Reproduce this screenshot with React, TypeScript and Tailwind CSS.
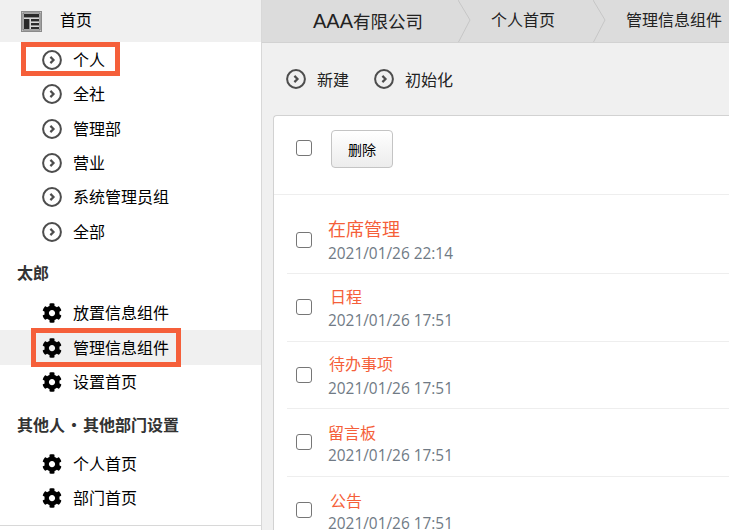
import { FaCog } from "react-icons/fa";

const font = "font-['Noto_Sans_CJK_SC','Liberation_Sans',sans-serif]";

const CircleArrow = () => (
  <svg width="20" height="20" viewBox="0 0 20 20" className="shrink-0">
    <circle cx="10" cy="10" r="8.9" fill="none" stroke="#4d4d4d" strokeWidth="2" />
    <path d="M8.4 6.9 L11.5 10 L8.4 13.1" fill="none" stroke="#4d4d4d" strokeWidth="2.2" />
  </svg>
);

const HomeIcon = () => (
  <svg width="21" height="21" viewBox="0 0 21 21" className="shrink-0">
    <rect x="0.5" y="0.5" width="20" height="20" fill="#cfcfcf" stroke="#8a8a8a" />
    <rect x="2" y="2" width="17" height="17" fill="#d8d8d8" stroke="#333" strokeWidth="0.6" />
    <rect x="3" y="3" width="15" height="3.4" fill="#2a2a2a" />
    <rect x="3" y="8" width="5.4" height="10" fill="#2a2a2a" />
    <rect x="10" y="8" width="8" height="2.4" fill="#2a2a2a" />
    <rect x="10" y="12" width="8" height="2.4" fill="#2a2a2a" />
    <rect x="10" y="16" width="8" height="2" fill="#2a2a2a" />
  </svg>
);

const NavItem = ({ label, gear, active }: { label: string; gear?: boolean; active?: boolean }) => (
  <div className={`flex h-[34.4px] items-center pl-[42px] text-[16px] text-black ${active ? "bg-[#f0f0f0]" : ""}`}>
    {gear ? <FaCog size={20} className="shrink-0 text-black" /> : <CircleArrow />}
    <span className="ml-[11px] pb-[2px]">{label}</span>
  </div>
);

const Chevron = () => (
  <svg width="14" height="44" viewBox="0 0 14 44" className="absolute right-[-13px] top-0 z-10">
    <path d="M0 0 L12 20 L0 43" fill="none" stroke="#c6c6c6" strokeWidth="1" />
  </svg>
);

const rows = [
  { title: "在席管理", date: "2021/01/26 22:14", size: "text-[18px]", pl: "pl-0", h: "h-[79px]", pt: "pt-[12px]", titleMt: "mt-[1px]", dateMt: "mt-[3px]" },
  { title: "日程", date: "2021/01/26 17:51", size: "text-[16px]", pl: "pl-[2px]", h: "h-[67.5px]", pt: "pt-0", titleMt: "mt-[2px]", dateMt: "mt-[2px]" },
  { title: "待办事项", date: "2021/01/26 17:51", size: "text-[16px]", pl: "pl-[1px]", h: "h-[67.5px]", pt: "pt-0", titleMt: "mt-[1px]", dateMt: "mt-[3px]" },
  { title: "留言板", date: "2021/01/26 17:51", size: "text-[16px]", pl: "pl-0", h: "h-[67.5px]", pt: "pt-0", titleMt: "mt-[3px]", dateMt: "mt-[1px]" },
  { title: "公告", date: "2021/01/26 17:51", size: "text-[16px]", pl: "pl-[2px]", h: "h-[67.5px]", pt: "pt-0", titleMt: "mt-[3px]", dateMt: "mt-[1px]" },
];

const Checkbox = () => <div className="h-[16px] w-[16px] shrink-0 rounded-[3px] border border-[#767676] bg-white" />;

export default function App() {
  return (
    <div className={`relative flex h-[530px] w-[729px] overflow-hidden bg-white ${font}`}>
      <aside className="relative h-full w-[262px] shrink-0 border-r border-[#d8d8d8] bg-white">
        <div className="flex h-[42px] items-center bg-[#f0f0f0] pl-[21px] text-[16px] text-black">
          <HomeIcon />
          <span className="ml-[18px] pb-[4px]">首页</span>
        </div>
        <div className="pt-[0.6px]">
          {["个人", "全社", "管理部", "营业", "系统管理员组", "全部"].map((l) => (
            <NavItem key={l} label={l} />
          ))}
        </div>
        <div className="mt-[6.5px] flex h-[34px] items-center pl-[17px] text-[16px] font-bold text-[#333]">太郎</div>
        <div className="mt-[6.6px]">
          <NavItem label="放置信息组件" gear />
          <NavItem label="管理信息组件" gear active />
          <NavItem label="设置首页" gear />
        </div>
        <div className="mt-[8.2px] flex h-[34px] items-center pl-[17px] text-[16px] font-bold text-[#333]">
          其他人<span className="mx-[1px]">·</span>其他部门设置
        </div>
        <div className="mt-[5.2px]">
          <NavItem label="个人首页" gear />
          <NavItem label="部门首页" gear />
        </div>
        <div className="mt-[9.4px] border-t border-[#d8d8d8]" />
        <div className="absolute left-[21px] top-[42px] h-[34px] w-[99px] border-[5px] border-[#f55f3a]" />
        <div className="absolute left-[31px] top-[328px] h-[39px] w-[150px] border-[5px] border-[#f55f3a]" />
      </aside>
      <main className="min-w-0 flex-1 bg-[#f0f0f0]">
        <div className="flex h-[43px] overflow-hidden border-b border-[#d2d2d2] bg-[#dcdcdc] text-[#222]">
          <div className="relative flex h-full w-[197px] shrink-0 items-center pl-[51px] text-[17.5px]">
            <span className="font-['Liberation_Sans',sans-serif] text-[20px]">AAA</span>有限公司
            <Chevron />
          </div>
          <div className="relative flex h-full w-[135px] shrink-0 items-center pb-[4px] pl-[32px] text-[16px]">
            个人首页
            <Chevron />
          </div>
          <div className="flex h-full items-center whitespace-nowrap pb-[4px] pl-[32px] text-[16px]">管理信息组件</div>
        </div>
        <div className="flex h-[72px] items-center pl-[24px] text-[16px] text-[#222]">
          <CircleArrow />
          <span className="ml-[11px]">新建</span>
          <span className="ml-[25px]"><CircleArrow /></span>
          <span className="ml-[11px]">初始化</span>
        </div>
        <section className="ml-[11px] rounded-tl-[4px] border-l border-t border-[#d2d2d2] bg-white">
          <div className="flex h-[79px] items-start border-b border-[#eeeeee] pl-[22px]">
            <div className="mt-[24px]"><Checkbox /></div>
            <button className="ml-[19px] mt-[14px] h-[38px] w-[62px] rounded-[4px] border border-[#c4c4c4] bg-gradient-to-b from-white to-[#ececec] text-[14px] text-black">
              删除
            </button>
          </div>
          <div className="pl-[13px]">
            {rows.map((r) => (
              <div key={r.title} className={`flex items-center border-b border-[#eeeeee] pl-[9px] ${r.h} ${r.pt}`}>
                <Checkbox />
                <div className="ml-[16px] flex h-[50px] flex-col">
                  <span className={`leading-[24px] text-[#f55f3a] ${r.size} ${r.pl} ${r.titleMt}`}>{r.title}</span>
                  <span className={`font-['Open_Sans',sans-serif] text-[15.4px] leading-[22px] text-[#707a85] ${r.dateMt}`}>{r.date}</span>
                </div>
              </div>
            ))}
          </div>
        </section>
      </main>
    </div>
  );
}
